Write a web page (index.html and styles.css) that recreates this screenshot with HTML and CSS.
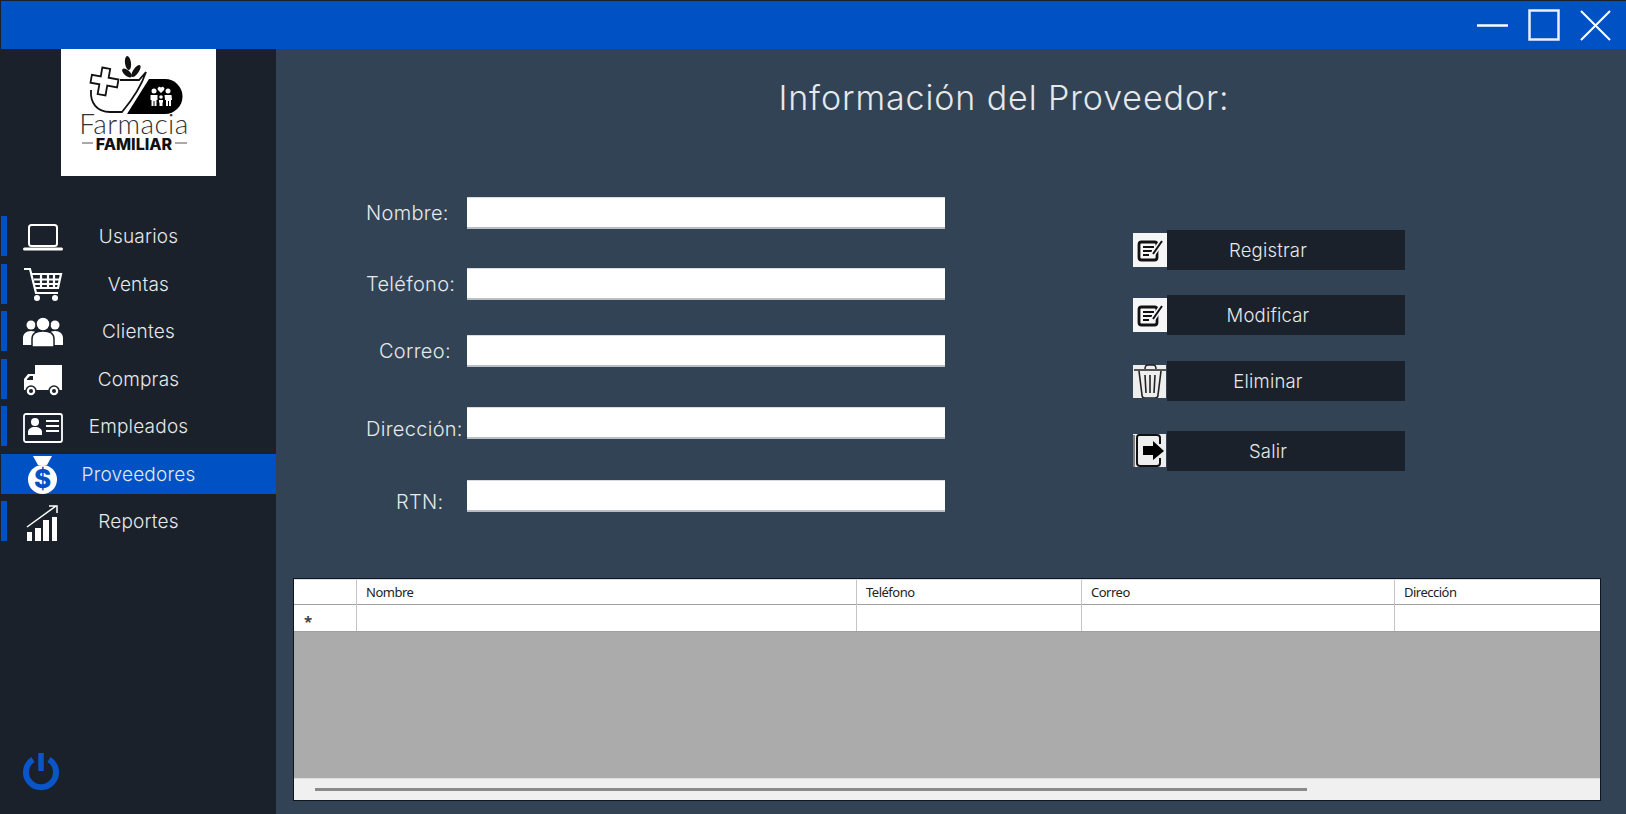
FILE: index.html
```html
<!DOCTYPE html>
<html lang="es">
	<head>
		<meta charset="utf-8">
		<title>Información del Proveedor</title>
		<link rel="stylesheet" href="styles.css">
	</head>
	<body>
		<div class="titlebar">
			<svg class="win-icon" width="32" height="30" viewBox="0 0 32 30"><path d="M0 15.500H31" stroke="#fff" stroke-width="2.500"/></svg>
			<svg class="win-icon" width="32" height="32" viewBox="0 0 32 32"><rect x="1.500" y="1.500" width="29" height="29" fill="none" stroke="#eef" stroke-width="2.500"/></svg>
			<svg class="win-icon" width="32" height="32" viewBox="0 0 32 32"><path d="M2 2L31 31M31 2L2 31" stroke="#fff" stroke-width="2"/></svg>
		</div>
		<div class="app">
			<div class="sidebar">
				<div class="logo">
					<svg width="155" height="127" viewBox="61 49 155 127">
						<g fill="#111">
							<ellipse cx="128" cy="63" rx="3" ry="7" transform="rotate(-8 128 63)"/>
							<ellipse cx="127" cy="73" rx="2.800" ry="6" transform="rotate(-50 127 73)"/>
							<ellipse cx="136" cy="71" rx="2.800" ry="7" transform="rotate(35 136 71)"/>
						</g>
						<path d="M120 80H139L146 72C142 84 132 100 122 112H110C97 112 90 103 91 90" fill="none" stroke="#111" stroke-width="1.800"/>
						<path d="M149 79H165a17.500 17.500 0 0 1 0 35H127z" fill="#000"/>
						<path d="M100 68h8v9h10v8h-10v10h-8v-10h-9v-8h9z" fill="#fff" stroke="#111" stroke-width="1.800" transform="rotate(10 104 81)"/>
						<g fill="#fff">
							<circle cx="154" cy="91" r="2.500"/>
							<circle cx="168" cy="91" r="2.500"/>
							<circle cx="161" cy="97" r="1.800"/>
							<path d="M150.500 95h7v5h-1v6h-2v-5h-1v5h-2v-6h-1zM164.500 95h7l.5 5h-1v6h-2v-5h-1v5h-2v-6h-1zM159 100h4v2.500h-.5v3.500h-3v-3.500h-.5z"/>
							<path d="M161 93l-3-3a1.800 1.800 0 0 1 3-2.300a1.800 1.800 0 0 1 3 2.300z"/>
						</g>
						<text class="logo-top" x="134" y="134" text-anchor="middle">Farmacia</text>
						<path d="M82 143H93M175 143H187" stroke="#555" stroke-width="1"/>
						<text class="logo-bottom" x="134" y="150" text-anchor="middle">FAMILIAR</text>
					</svg>
				</div>
				<div class="menu">
					<div class="menu-row">
						<span class="accent"></span>
						<svg class="menu-icon" viewBox="0 0 42 40"><rect x="7" y="9" width="28" height="21" rx="2.500" fill="none" stroke="#fff" stroke-width="2"/><path d="M2.500 33H39.500" stroke="#fff" stroke-width="3" stroke-linecap="round"/></svg>
						<span class="menu-text">Usuarios</span>
					</div>
					<div class="menu-row">
						<span class="accent"></span>
						<svg class="menu-icon" viewBox="0 0 42 40"><path d="M2 5H8L14 29H36M9 10H39L36 24H13M12 15.500H38M12 20H37M19 10V24M26 10V24M32 10V24" fill="none" stroke="#fff" stroke-width="2.200"/><circle cx="15" cy="34" r="3" fill="#fff"/><circle cx="33" cy="34" r="3" fill="#fff"/></svg>
						<span class="menu-text">Ventas</span>
					</div>
					<div class="menu-row">
						<span class="accent"></span>
						<svg class="menu-icon" viewBox="0 0 42 40"><circle cx="9" cy="14" r="4.500" fill="#fff"/><circle cx="33" cy="14" r="4.500" fill="#fff"/><path d="M1 34V27C1 23 4 20 9 20C14 20 17 23 17 27V34zM25 34V27C25 23 28 20 33 20C38 20 41 23 41 27V34z" fill="#fff"/><path d="M21 6a7 7 0 0 1 0 14a7 7 0 0 1 0-14zM10 36V28C10 23 14 20 21 20C28 20 32 23 32 28V36z" fill="#fff" stroke="#1a212a" stroke-width="1.500"/></svg>
						<span class="menu-text">Clientes</span>
					</div>
					<div class="menu-row">
						<span class="accent"></span>
						<svg class="menu-icon" viewBox="0 0 42 40"><path d="M13 6H40V31H2V20L6 15H13z" fill="#fff"/><path d="M5 20L8 17H11V21H5z" fill="#1a212a"/><circle cx="9" cy="32" r="5" fill="#fff" stroke="#1a212a" stroke-width="1.500"/><circle cx="9" cy="32" r="2" fill="#1a212a"/><circle cx="32" cy="32" r="5" fill="#fff" stroke="#1a212a" stroke-width="1.500"/><circle cx="32" cy="32" r="2" fill="#1a212a"/></svg>
						<span class="menu-text">Compras</span>
					</div>
					<div class="menu-row">
						<span class="accent"></span>
						<svg class="menu-icon" viewBox="0 0 42 40"><rect x="2" y="8" width="38" height="28" rx="2" fill="none" stroke="#fff" stroke-width="1.800"/><circle cx="13" cy="16" r="4" fill="#fff"/><path d="M6 29V26C6 23 9 21 13 21C17 21 20 23 20 26V29z" fill="#fff"/><path d="M24 15H37M24 20H37M24 25H37" stroke="#fff" stroke-width="2"/><path d="M12 35v2M30 35v2" stroke="#fff" stroke-width="2"/></svg>
						<span class="menu-text">Empleados</span>
					</div>
					<div class="menu-row active">
						<span class="accent"></span>
						<svg class="menu-icon" viewBox="0 0 42 40"><path d="M11 2H30L25 11H16z" fill="#fff"/><circle cx="20.500" cy="25.500" r="14.500" fill="#fff"/><text class="bag-sign" x="20.500" y="34" text-anchor="middle">$</text></svg>
						<span class="menu-text">Proveedores</span>
					</div>
					<div class="menu-row">
						<span class="accent"></span>
						<svg class="menu-icon" viewBox="0 0 42 40"><path d="M5 31H10V40H5zM13 27H19V40H13zM21 19H27V40H21zM30 16H35V40H30z" fill="#fff"/><path d="M5 26L34 5M27 5H35V12" fill="none" stroke="#fff" stroke-width="1.500"/></svg>
						<span class="menu-text">Reportes</span>
					</div>
				</div>
				<svg class="power" width="38" height="40" viewBox="0 0 38 40"><path d="M11 7.500A15 15 0 1 0 27 7.500" fill="none" stroke="#0a55c8" stroke-width="6"/><path d="M19 1V19" stroke="#0a55c8" stroke-width="5.500"/></svg>
			</div>
			<div class="main">
				<h1 class="title">Información del Proveedor:</h1>
				<div class="content">
					<div class="form">
						<label class="lbl">Nombre:</label><input class="field" type="text">
						<label class="lbl">Teléfono:</label><input class="field" type="text">
						<label class="lbl lbl-correo">Correo:</label><input class="field" type="text">
						<label class="lbl lbl-low">Dirección:</label><input class="field" type="text">
						<label class="lbl lbl-low lbl-rtn">RTN:</label><input class="field" type="text">
					</div>
					<div class="actions">
						<div class="action">
							<svg class="action-icon" viewBox="0 0 34 34"><rect width="34" height="34" fill="#f6f6f6"/><rect x="6" y="9" width="18" height="18" rx="2.500" fill="none" stroke="#111" stroke-width="2.800"/><path d="M10 14H21M10 18H19M10 22H16" stroke="#111" stroke-width="1.800"/><path d="M29 8L20 21" stroke="#f6f6f6" stroke-width="5"/><path d="M29 8L20 21" stroke="#111" stroke-width="2"/></svg>
							<span class="action-text">Registrar</span>
						</div>
						<div class="action">
							<svg class="action-icon" viewBox="0 0 34 34"><rect width="34" height="34" fill="#f6f6f6"/><rect x="6" y="9" width="18" height="18" rx="2.500" fill="none" stroke="#111" stroke-width="2.800"/><path d="M10 14H21M10 18H19M10 22H16" stroke="#111" stroke-width="1.800"/><path d="M29 8L20 21" stroke="#f6f6f6" stroke-width="5"/><path d="M29 8L20 21" stroke="#111" stroke-width="2"/></svg>
							<span class="action-text">Modificar</span>
						</div>
						<div class="action">
							<svg class="action-icon" viewBox="0 0 34 34"><rect width="33" height="34" y="1" fill="#eeeeee"/><path d="M1 6H33M12 5C12 2 13 1 15 1H20C22 1 23 2 23 5" fill="none" stroke="#222" stroke-width="1.500"/><path d="M6 7L9 31C9 33 10 34 12 34H22C24 34 25 33 25 31L28 7M12 11L13 29M17 11V29M22 11L21 29" fill="none" stroke="#222" stroke-width="1.600"/></svg>
							<span class="action-text">Eliminar</span>
						</div>
						<div class="action">
							<svg class="action-icon" viewBox="0 0 34 34"><rect width="33" height="33" fill="#eeeeee"/><path d="M27 10V4C27 2 26 1 24 1H6C5 1 4 2 4 4V29C4 31 5 32 7 32H24C26 32 27 31 27 29V24" fill="none" stroke="#111" stroke-width="2"/><path d="M1 1V33" stroke="#111"/><path d="M10 12H20V7L31 17L20 26V21H10z" fill="#000"/></svg>
							<span class="action-text">Salir</span>
						</div>
					</div>
				</div>
				<div class="grid-box">
					<div class="grid-row grid-head">
						<div class="cell"></div>
						<div class="cell">Nombre</div>
						<div class="cell">Teléfono</div>
						<div class="cell">Correo</div>
						<div class="cell">Dirección</div>
					</div>
					<div class="grid-row grid-new">
						<div class="cell row-mark">*</div>
						<div class="cell"></div>
						<div class="cell"></div>
						<div class="cell"></div>
						<div class="cell"></div>
					</div>
					<div class="grid-empty"></div>
					<div class="hscroll"><div class="thumb"></div></div>
				</div>
			</div>
		</div>
	</body>
</html>
```

FILE: styles.css
```css
html,body{
	margin:0;
	height:100%;
}

body{
	display:flex;
	flex-direction:column;
	box-sizing:border-box;
	height:814px;
	padding:1px 0 0 1px;
	overflow:hidden;
	background:#1a212a;
	font-family:"Inter","Liberation Sans",sans-serif;
	color:#e6e8ea;
}

.titlebar{
	display:flex;
	align-items:center;
	justify-content:flex-end;
	gap:19px;
	height:48px;
	padding-right:15px;
	background:#0052c4;
}

.win-icon{
	display:block;
}

.app{
	display:flex;
	flex:1;
	min-height:0;
}

.sidebar{
	display:flex;
	flex-direction:column;
	width:275px;
	background:#1a212a;
}

.logo{
	width:155px;
	height:127px;
	margin-left:60px;
	background:#fff;
}

.logo svg{
	display:block;
}

.logo-top{
	font-family:"Lato",sans-serif;
	font-size:28px;
	font-weight:300;
	letter-spacing:.4px;
	fill:#333;
}

.logo-bottom{
	font-family:"Inter",sans-serif;
	font-size:16px;
	font-weight:800;
	fill:#111;
}

.menu{
	display:grid;
	grid-auto-rows:40px;
	row-gap:7.5px;
	margin-top:40px;
}

.menu-row{
	display:grid;
	grid-template-columns:6px 62px 1fr 68px;
	align-items:center;
}

.accent{
	height:100%;
	background:#0052c4;
}

.menu-icon{
	display:block;
	width:42px;
	height:40px;
	margin-left:15px;
}

.menu-text{
	padding-top:1px;
	font-size:19px;
	font-weight:300;
	letter-spacing:.2px;
	text-align:center;
	white-space:nowrap;
}

.active{
	background:#0052c4;
}

.bag-sign{
	font-family:"Inter",sans-serif;
	font-size:26px;
	font-weight:800;
	fill:#0052c4;
}

.power{
	display:block;
	margin:auto 0 22px 21px;
}

.main{
	display:flex;
	flex:1;
	flex-direction:column;
	min-width:0;
	background:#324355;
}

.title{
	height:119px;
	margin:0;
	padding:29px 0 0 106px;
	font-size:34px;
	font-weight:300;
	letter-spacing:.9px;
	line-height:40px;
	text-align:center;
	white-space:nowrap;
}

.content{
	display:flex;
	padding-left:90px;
}

.form{
	display:grid;
	grid-template-columns:101px 478px;
	grid-template-rows:71px 67px 72px 73px 32px;
}

.lbl{
	font-size:20px;
	font-weight:300;
	letter-spacing:.3px;
	line-height:32px;
	white-space:nowrap;
}

.lbl-correo{
	padding-left:13px;
}

.lbl-low{
	padding-top:6px;
}

.lbl-rtn{
	padding-left:30px;
}

.field{
	box-sizing:border-box;
	width:478px;
	height:32px;
	border:0;
	border-top:1px solid #d8dce0;
	border-bottom:2px solid #b9bec4;
	background:#fff;
}

.actions{
	display:grid;
	grid-template-rows:65px 66px 70px 40px;
	margin:33px 0 0 188px;
}

.action{
	display:flex;
	align-items:center;
	height:40px;
}

.action-icon{
	display:block;
	width:34px;
	height:34px;
}

.action-text{
	box-sizing:border-box;
	width:238px;
	height:40px;
	padding-right:36px;
	background:#1a212a;
	font-size:18.5px;
	font-weight:300;
	letter-spacing:.2px;
	line-height:41px;
	text-align:center;
}

.grid-box{
	display:flex;
	flex-direction:column;
	box-sizing:border-box;
	width:1308px;
	height:223px;
	margin:auto 0 13px 17px;
	border:1px solid #11161c;
	background:#ababab;
	font-family:"Noto Sans",sans-serif;
	font-size:13px;
	letter-spacing:-.5px;
	color:#222;
}

.grid-row{
	display:grid;
	grid-template-columns:62px 500px 225px 313px 1fr;
	background:#fff;
}

.grid-head{
	height:24px;
	border-top:1px solid #ddd;
	border-bottom:1px solid #a0a0a0;
}

.grid-new{
	height:26px;
	overflow:hidden;
	border-bottom:1px solid #a0a0a0;
}

.cell{
	padding:0 0 0 9px;
	border-left:1px solid #c4c4c4;
	line-height:25px;
}

.cell:first-child{
	border-left:0;
}

.row-mark{
	padding-left:10px;
	font-size:15px;
	font-weight:700;
	line-height:32px;
	color:#444;
}

.grid-empty{
	flex:1;
}

.hscroll{
	display:flex;
	align-items:center;
	box-sizing:border-box;
	height:22px;
	padding-left:21px;
	border-top:1px solid #ddd;
	background:#f0f0f0;
}

.thumb{
	width:992px;
	height:3px;
	background:#8a8a8a;
}
```
